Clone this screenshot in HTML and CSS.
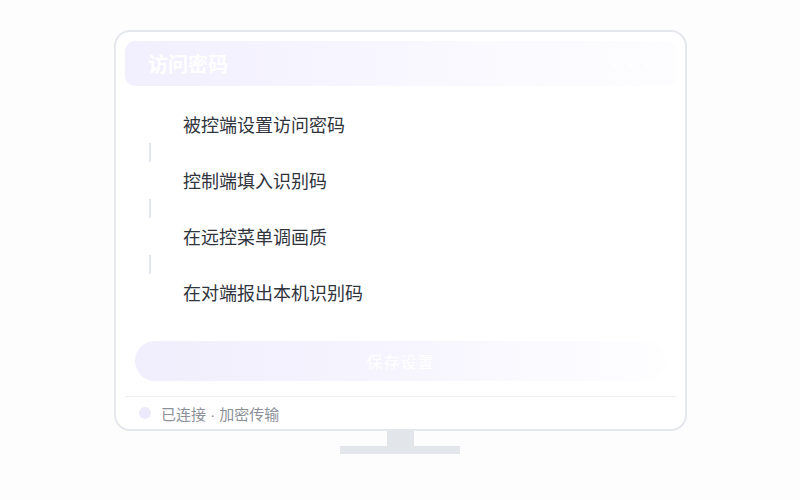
FILE: index.html
```html
<!DOCTYPE html>
<html lang="zh">
<head>
<meta charset="utf-8">
<title>访问密码</title>
<link rel="stylesheet" href="styles.css">
</head>
<body>
<div class="stage">
  <div class="screen">
    <div class="header">
      <span class="title">访问密码</span>
      <span class="header-aux">•••</span>
    </div>
    <div class="steps">
      <div class="step"><span class="marker"></span><span class="label">被控端设置访问密码</span></div>
      <div class="connector"></div>
      <div class="step"><span class="marker"></span><span class="label">控制端填入识别码</span></div>
      <div class="connector"></div>
      <div class="step"><span class="marker"></span><span class="label">在远控菜单调画质</span></div>
      <div class="connector"></div>
      <div class="step"><span class="marker"></span><span class="label">在对端报出本机识别码</span></div>
    </div>
    <div class="save-btn">保存设置</div>
    <div class="divider"></div>
    <div class="footer">
      <span class="dot"></span>
      <span class="status">已连接 · 加密传输</span>
    </div>
  </div>
  <div class="neck"></div>
  <div class="base"></div>
</div>
</body>
</html>
```
FILE: styles.css
```css
* { box-sizing: border-box; }
html, body {
  margin: 0;
  padding: 0;
  background: #fdfdfe;
  font-family: "Noto Sans CJK SC", "Noto Sans", sans-serif;
}
.stage {
  width: 800px;
  height: 500px;
  padding-top: 30px;
  display: flex;
  flex-direction: column;
  align-items: center;
}
.screen {
  width: 573px;
  height: 401px;
  margin-left: 1px;
  border: 2px solid #e4e7ec;
  border-radius: 16px;
  background: #ffffff;
  padding: 9px 9px 0 9px;
  display: flex;
  flex-direction: column;
}
.header {
  height: 45px;
  flex: none;
  border-radius: 10px;
  background: linear-gradient(90deg, #f2effe 0%, #f7f5ff 40%, #fbfbff 75%, #fdfdff 100%);
  display: flex;
  align-items: center;
  justify-content: space-between;
  padding: 0 20px 0 23px;
}
.title {
  color: #ffffff;
  font-size: 20px;
  font-weight: 700;
  line-height: 1;
}
.header-aux {
  color: #ffffff;
  font-size: 14px;
  letter-spacing: 2px;
}
.steps {
  padding: 20px 0 0 13px;
  display: flex;
  flex-direction: column;
}
.step {
  height: 37px;
  display: flex;
  align-items: center;
  gap: 21px;
}
.marker {
  width: 24px;
  height: 24px;
  border-radius: 50%;
  background: #ffffff;
  flex: none;
}
.label {
  font-size: 18px;
  color: #30343c;
  line-height: 1;
  margin-top: -1px;
}
.connector {
  width: 2px;
  height: 19px;
  margin-left: 11px;
  background: #e3e6ee;
}
.save-btn {
  margin: 30px 10px 0 10px;
  height: 40px;
  border-radius: 20px;
  background: linear-gradient(90deg, #f1eefd 0%, #f5f3fe 40%, #fafaff 75%, #fefeff 100%);
  color: #ffffff;
  font-size: 16px;
  letter-spacing: 1px;
  display: flex;
  align-items: center;
  justify-content: center;
}
.divider {
  margin-top: 15px;
  height: 1px;
  background: #eef0f3;
}
.footer {
  height: 32px;
  display: flex;
  align-items: center;
  padding-left: 14px;
  gap: 10px;
}
.dot {
  width: 12px;
  height: 12px;
  border-radius: 50%;
  background: #ede9fd;
  flex: none;
}
.status {
  font-family: "Liberation Sans", "Noto Sans CJK SC", sans-serif;
  font-size: 15px;
  color: #8b909a;
}
.neck {
  width: 27px;
  height: 15px;
  background: #e2e5ea;
}
.base {
  width: 120px;
  height: 8px;
  background: #e2e5ea;
}
```
